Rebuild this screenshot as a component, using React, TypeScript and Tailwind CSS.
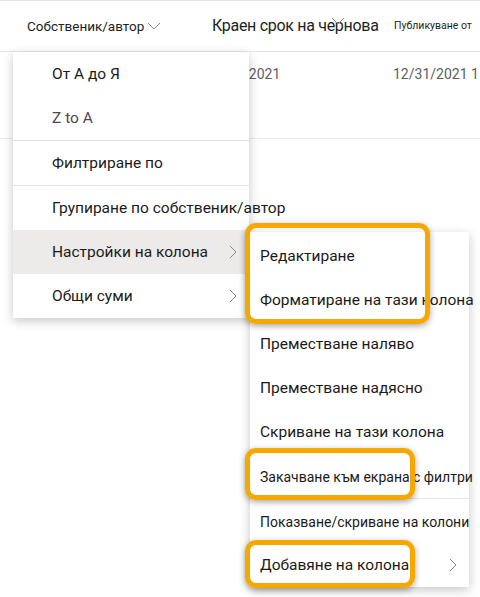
import React from 'react';

const font = { fontFamily: 'Roboto, "Noto Sans", "Liberation Sans", sans-serif' };

const ChevronRight = ({ className }: { className?: string }) => (
  <svg width="8" height="14" viewBox="0 0 8 14" className={className}>
    <path d="M1 1l6 6-6 6" fill="none" stroke="currentColor" strokeWidth="1" />
  </svg>
);

const ChevronDown = ({ className }: { className?: string }) => (
  <svg width="14" height="8" viewBox="0 0 14 8" className={className}>
    <path d="M1 1l6 6 6-6" fill="none" stroke="currentColor" strokeWidth="1" />
  </svg>
);

type Item = { label: string; sub?: boolean; small?: boolean; active?: boolean; muted?: boolean };

const MenuRow = ({ item, textX }: { item: Item; textX: string }) => (
  <div
    className={`flex h-[44px] items-center justify-between ${textX} pr-3 ${
      item.active ? 'bg-[#edebe9]' : ''
    }`}
  >
    <span
      className={`translate-y-[1px] whitespace-nowrap ${item.small ? 'text-[14px]' : 'text-[15.5px]'} ${
        item.muted ? 'text-[#4a4a4a]' : 'text-[#1b1a19]'
      }`}
    >
      {item.label}
    </span>
    {item.sub && <ChevronRight className="shrink-0 text-[#8a8886]" />}
  </div>
);

const Highlight = ({ className }: { className: string }) => (
  <div
    className={`absolute rounded-[11px] border-[5px] border-[#f7a800] shadow-[0_2px_6px_rgba(0,0,0,0.35)] ${className}`}
  />
);

export default function App() {
  return (
    <div className="relative h-[597px] w-[480px] overflow-hidden bg-white" style={font}>
      {/* list header */}
      <div className="flex h-[52px] items-center border-t border-b border-[#e6e4e2] text-[#201f1e]">
        <div className="flex w-[200px] items-center gap-[3px] pl-[27px]">
          <span className="text-[13.5px]">Собственик/автор</span>
          <ChevronDown className="text-[#8a8886]" />
        </div>
        <div className="relative ml-[12px] w-[182px]">
          <span className="whitespace-nowrap text-[16px] tracking-[-0.3px]">Краен срок на чернова</span>
          <ChevronDown className="absolute left-[119px] top-[3px] text-[#8a8886]" />
        </div>
        <span className="whitespace-nowrap text-[10.5px]">Публикуване от</span>
      </div>

      {/* data row */}
      <div className="flex h-[87px] items-start border-b border-[#edebe9] pt-[12px] text-[14px] text-[#605e5c]">
        <span className="ml-[243px] w-[150px]">/2021</span>
        <span className="whitespace-nowrap">12/31/2021 1</span>
      </div>

      {/* column menu */}
      <div className="absolute left-[13px] top-[52px] w-[236px] bg-white shadow-[0_3px_10px_rgba(0,0,0,0.22)]">
        <div className="border-b border-[#e6e4e2]">
          <MenuRow textX="pl-[39px]" item={{ label: 'От А до Я' }} />
          <MenuRow textX="pl-[39px]" item={{ label: 'Z to A', muted: true }} />
        </div>
        <div className="border-b border-[#e6e4e2]">
          <MenuRow textX="pl-[39px]" item={{ label: 'Филтриране по' }} />
        </div>
        <MenuRow textX="pl-[39px]" item={{ label: 'Групиране по собственик/автор' }} />
        <MenuRow textX="pl-[39px]" item={{ label: 'Настройки на колона', sub: true, active: true }} />
        <MenuRow textX="pl-[39px]" item={{ label: 'Общи суми', sub: true }} />
      </div>

      {/* column settings submenu */}
      <div className="absolute left-[250px] top-[232px] w-[219px] bg-white pt-[2px] shadow-[0_3px_10px_rgba(0,0,0,0.22)]">
        <div className="border-b border-[#e6e4e2]">
          <MenuRow textX="pl-[10px]" item={{ label: 'Редактиране' }} />
          <MenuRow textX="pl-[10px]" item={{ label: 'Форматиране на тази колона' }} />
          <MenuRow textX="pl-[10px]" item={{ label: 'Преместване наляво' }} />
          <MenuRow textX="pl-[10px]" item={{ label: 'Преместване надясно' }} />
          <MenuRow textX="pl-[10px]" item={{ label: 'Скриване на тази колона' }} />
          <MenuRow textX="pl-[10px]" item={{ label: 'Закачване към екрана с филтри', small: true }} />
        </div>
        <MenuRow textX="pl-[10px]" item={{ label: 'Показване/скриване на колони', small: true }} />
        <MenuRow textX="pl-[10px]" item={{ label: 'Добавяне на колона', sub: true }} />
      </div>

      {/* callouts */}
      <Highlight className="left-[245px] top-[223px] h-[101px] w-[185px]" />
      <Highlight className="left-[245px] top-[448px] h-[52px] w-[170px]" />
      <Highlight className="left-[245px] top-[540px] h-[48px] w-[170px]" />
    </div>
  );
}
